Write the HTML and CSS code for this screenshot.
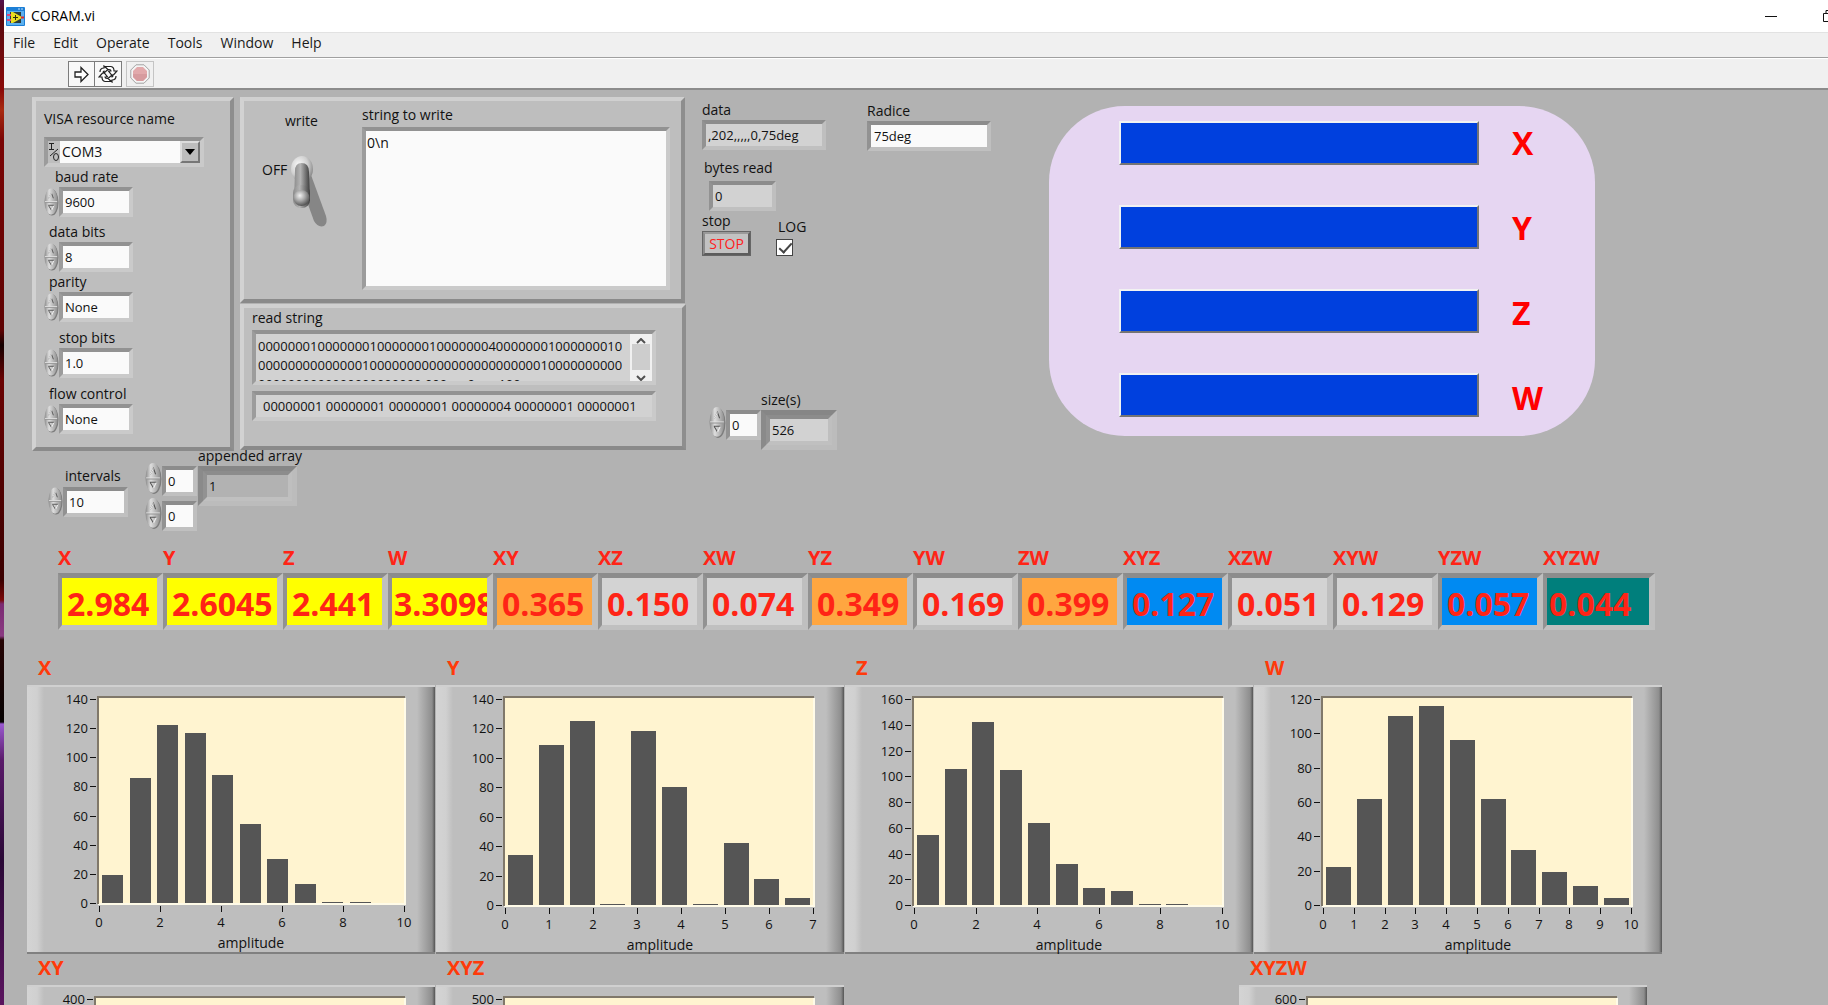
FILE: index.html
```html
<!DOCTYPE html>
<html lang="en">
<head>
<meta charset="utf-8">
<title>CORAM.vi</title>
<link rel="stylesheet" href="styles.css">
</head>
<body>
<svg class="defs" aria-hidden="true">
  <defs>
    <linearGradient id="knob" x1="0" y1="0" x2="1" y2="0">
      <stop offset="0" stop-color="#8a8a8a"/><stop offset=".35" stop-color="#dedede"/><stop offset="1" stop-color="#8e8e8e"/>
    </linearGradient>
    <linearGradient id="lever" x1="0" y1="0" x2="1" y2="0">
      <stop offset="0" stop-color="#8c8c8c"/><stop offset=".4" stop-color="#b4b4b4"/><stop offset="1" stop-color="#3c3c3c"/>
    </linearGradient>
    <radialGradient id="tip" cx=".4" cy=".35" r=".65">
      <stop offset="0" stop-color="#f2f2f2"/><stop offset=".5" stop-color="#a8a8a8"/><stop offset="1" stop-color="#555"/>
    </radialGradient>
    <radialGradient id="base" cx=".35" cy=".35" r=".7">
      <stop offset="0" stop-color="#fafafa"/><stop offset=".6" stop-color="#cfcfcf"/><stop offset="1" stop-color="#8a8a8a"/>
    </radialGradient>
    <symbol id="spin" viewBox="0 0 16 30">
      <ellipse cx="8.500" cy="15.500" rx="7" ry="14" fill="#7c7c7c"/>
      <ellipse cx="7.500" cy="14.500" rx="7" ry="14" fill="url(#knob)"/>
      <path d="M1 14.500H14" stroke="#e0e0e0"/><path d="M1 15.500H14" stroke="#999"/>
      <path d="M5 11 8 5.500 10 11" fill="none" stroke="#555"/><path d="M5 11 8 5.500" fill="none" stroke="#f0f0f0"/>
      <path d="M4.500 18.500H10.500M5 19 8 24" fill="none" stroke="#555"/><path d="M10.500 19 8 24" stroke="#f0f0f0"/>
    </symbol>
  </defs>
</svg>
<div class="desktop">
  <div class="app">
    <header class="titlebar">
      <svg class="logo" viewBox="0 0 19 19" aria-hidden="true">
        <rect x="0" y="0" width="19" height="19" rx="1" fill="#1c7fd6"/>
        <rect x="1" y="4" width="17" height="14" fill="#5cb0ee"/>
        <path d="M12 2h2M15 2h2" stroke="#bfe0fa"/>
        <rect x="4" y="5" width="11" height="11" fill="#2c3c3c"/>
        <path d="M1 8h4M1 13h4" stroke="#e0457b" stroke-width="2"/>
        <path d="M13 10.500h5" stroke="#e02a2a" stroke-width="2"/>
        <path d="M5 5V16L7 16 15 11.500V9.500L7 5Z" fill="#e8dc20"/>
        <path d="M7 10.500h5M9.500 8v5" stroke="#2b2b10"/>
      </svg>
      <h1>CORAM.vi</h1>
      <div class="controls">
        <button type="button" aria-label="Minimize"><svg width="12" height="12" viewBox="0 0 12 12"><path d="M0 6.500H12" stroke="#111"/></svg></button>
        <button type="button" aria-label="Restore"><svg width="12" height="12" viewBox="0 0 12 12"><path d="M.5 3.500h8v8h-8zM3 3V.5h8.500v8.500H9" fill="none" stroke="#111"/></svg></button>
      </div>
    </header>
    <nav class="menu">
      <a href="#file">File</a><a href="#edit">Edit</a><a href="#operate">Operate</a><a href="#tools">Tools</a><a href="#window">Window</a><a href="#help">Help</a>
    </nav>
    <div class="toolbar">
      <button type="button" class="tool" aria-label="Run"><svg width="15" height="17" viewBox="0 0 15 17"><path d="M1 6H7V1.500L14 8.500 7 15.500V11H1Z" fill="#fff" stroke="#222" stroke-width="1.300"/></svg></button>
      <button type="button" class="tool" aria-label="Run continuously"><svg width="20" height="18" viewBox="0 0 20 18"><g fill="#fff" stroke="#222" stroke-width="1.200"><path d="M7 1.500H13Q16 2 16 6H19L14.500 11 10.500 6H13Q13 4.500 11 4.500H9Z"/><path d="M13 16.500H7Q4 16 4 12H1L5.500 7 9.500 12H7Q7 13.500 9 13.500H11Z"/><path d="M2 7Q2 3 6 3V1L10 4.500 6 8V6Q5 6 5 8"/><path d="M18 11Q18 15 14 15V17L10 13.500 14 10V12Q15 12 15 10"/></g></svg></button>
      <button type="button" class="tool abort" aria-label="Abort"><svg width="20" height="20" viewBox="0 0 20 20"><path d="M6 .8H14L19.200 6V14L14 19.200H6L.8 14V6Z" fill="#f4f4f4" stroke="#a3a3a3"/><path d="M7 3H13L17 7V13L13 17H7L3 13V7Z" fill="#e2a9ab"/><path d="M3 10H17V13L13 17H7L3 13Z" fill="#d79b9e"/></svg></button>
    </div>

    <main class="canvas">
      <section class="upper">
        <div class="io">
          <div class="io-panels">
            <div class="panel visa">
              <label for="visa">VISA resource name</label>
              <div class="combo sunken">
                <svg width="12" height="22" viewBox="0 0 12 22" aria-hidden="true"><path d="M1 2.500h5M3.500 2.500v6M1 8.500h5M2 15 10 8" stroke="#222" fill="none"/><ellipse cx="8" cy="16" rx="2.500" ry="3.500" fill="none" stroke="#222"/></svg>
                <select id="visa"><option>COM3</option></select>
                <span class="drop" aria-hidden="true"><svg width="10" height="6" viewBox="0 0 10 6"><path d="M0 0H10L5 6Z" fill="#000"/></svg></span>
              </div>
              <div class="settings">
                <div><label class="in-md" for="baud">baud rate</label><div class="num"><button type="button" class="spin" aria-label="Step baud rate"><svg><use href="#spin"/></svg></button><input class="sunken" id="baud" value="9600"></div></div>
                <div><label class="in-sm" for="bits">data bits</label><div class="num"><button type="button" class="spin" aria-label="Step data bits"><svg><use href="#spin"/></svg></button><input class="sunken" id="bits" value="8"></div></div>
                <div><label class="in-sm" for="parity">parity</label><div class="num"><button type="button" class="spin" aria-label="Step parity"><svg><use href="#spin"/></svg></button><input class="sunken" id="parity" value="None"></div></div>
                <div><label class="in-lg" for="stopbits">stop bits</label><div class="num"><button type="button" class="spin" aria-label="Step stop bits"><svg><use href="#spin"/></svg></button><input class="sunken" id="stopbits" value="1.0"></div></div>
                <div><label class="in-sm" for="flow">flow control</label><div class="num"><button type="button" class="spin" aria-label="Step flow control"><svg><use href="#spin"/></svg></button><input class="sunken" id="flow" value="None"></div></div>
              </div>
            </div>
            <div class="strings">
              <div class="panel write">
                <div class="toggle">
                  <label for="write">write</label>
                  <div class="switch">
                    <span>OFF</span>
                    <label for="write"><input type="checkbox" id="write">
                      <svg width="42" height="74" viewBox="0 0 42 74" aria-hidden="true">
                        <path d="M12 30 25 66Q29 73 35 71Q39 68 37 61L22 20Z" fill="#868686"/>
                        <ellipse cx="13" cy="14" rx="11" ry="13" fill="url(#base)"/>
                        <path d="M6 16Q6 8 12.500 8Q20 8 20 17L21 46H5Z" fill="url(#lever)"/>
                        <rect x="4" y="30" width="17" height="23" rx="8" fill="url(#lever)"/>
                        <circle cx="12.500" cy="43" r="8" fill="url(#tip)"/>
                      </svg>
                    </label>
                  </div>
                </div>
                <div class="towrite">
                  <label for="out">string to write</label>
                  <textarea class="sunken" id="out">0\n</textarea>
                </div>
              </div>
              <div class="panel read">
                <div class="readlabel">read string</div>
                <div class="sunken log">
                  <div class="logtext">0000000100000001000000010000000400000001000000010<br>0000000000000010000000000000000000000010000000000<br>0000000000000000000000 000,,,,&nbsp; 0,,,,&nbsp; &nbsp;100</div>
                  <div class="scroll" aria-hidden="true">
                    <svg width="10" height="6" viewBox="0 0 10 6"><path d="M1 5 5 1 9 5" fill="none" stroke="#505050" stroke-width="2"/></svg>
                    <span class="thumb"></span>
                    <svg width="10" height="6" viewBox="0 0 10 6"><path d="M1 1 5 5 9 1" fill="none" stroke="#505050" stroke-width="2"/></svg>
                  </div>
                </div>
                <input class="sunken ro" aria-label="read bytes" readonly value="00000001 00000001 00000001 00000004 00000001 00000001">
              </div>
            </div>
          </div>
          <div class="arrays">
            <div class="intervals"><label for="intervals">intervals</label><div class="num"><button type="button" class="spin" aria-label="Step intervals"><svg><use href="#spin"/></svg></button><input class="sunken" id="intervals" value="10"></div></div>
            <div class="indices">
              <div class="num index"><button type="button" class="spin" aria-label="Step row"><svg><use href="#spin"/></svg></button><input class="sunken" aria-label="row index" value="0"></div>
              <div class="num index"><button type="button" class="spin" aria-label="Step column"><svg><use href="#spin"/></svg></button><input class="sunken" aria-label="column index" value="0"></div>
            </div>
            <div class="appended"><label for="appended">appended array</label><div class="frame"><input class="sunken" id="appended" readonly value="1"></div></div>
          </div>
        </div>

        <div class="status">
          <label for="data">data</label>
          <input class="sunken ro" id="data" readonly value=",202,,,,,0,75deg">
          <div class="bytes"><label for="bytes">bytes read</label><input class="sunken ro" id="bytes" readonly value="0"></div>
          <div class="actions">
            <div><label for="stop">stop</label><button type="button" id="stop" class="stop">STOP</button></div>
            <div class="logbox"><label for="log">LOG</label><input type="checkbox" id="log" checked></div>
          </div>
          <div class="sizes">
            <div class="num index"><button type="button" class="spin" aria-label="Step size index"><svg><use href="#spin"/></svg></button><input class="sunken" aria-label="size index" value="0"></div>
            <div class="size"><label for="size">size(s)</label><div class="frame"><input class="sunken ro" id="size" readonly value="526"></div></div>
          </div>
        </div>

        <div class="radice"><label for="radice">Radice</label><input class="sunken" id="radice" value="75deg"></div>

        <div class="lamps">
          <div class="bars"><span></span><span></span><span></span><span></span></div>
          <div class="names"><span>X</span><span>Y</span><span>Z</span><span>W</span></div>
        </div>
      </section>

      <section class="values">
        <div><label for="vX">X</label><input class="sunken yellow" id="vX" readonly value="2.984"></div>
        <div><label for="vY">Y</label><input class="sunken yellow" id="vY" readonly value="2.6045"></div>
        <div><label for="vZ">Z</label><input class="sunken yellow" id="vZ" readonly value="2.441"></div>
        <div><label for="vW">W</label><input class="sunken yellow tight" id="vW" readonly value="3.3098"></div>
        <div><label for="vXY">XY</label><input class="sunken orange" id="vXY" readonly value="0.365"></div>
        <div><label for="vXZ">XZ</label><input class="sunken" id="vXZ" readonly value="0.150"></div>
        <div><label for="vXW">XW</label><input class="sunken" id="vXW" readonly value="0.074"></div>
        <div><label for="vYZ">YZ</label><input class="sunken orange" id="vYZ" readonly value="0.349"></div>
        <div><label for="vYW">YW</label><input class="sunken" id="vYW" readonly value="0.169"></div>
        <div><label for="vZW">ZW</label><input class="sunken orange" id="vZW" readonly value="0.399"></div>
        <div><label for="vXYZ">XYZ</label><input class="sunken blue" id="vXYZ" readonly value="0.127"></div>
        <div><label for="vXZW">XZW</label><input class="sunken" id="vXZW" readonly value="0.051"></div>
        <div><label for="vXYW">XYW</label><input class="sunken" id="vXYW" readonly value="0.129"></div>
        <div><label for="vYZW">YZW</label><input class="sunken blue" id="vYZW" readonly value="0.057"></div>
        <div><label for="vXYZW">XYZW</label><input class="sunken teal tight" id="vXYZW" readonly value="0.044"></div>
      </section>

      <section class="charts">
        <figure data-chart="X"><figcaption>X</figcaption></figure>
        <figure data-chart="Y"><figcaption>Y</figcaption></figure>
        <figure data-chart="Z"><figcaption>Z</figcaption></figure>
        <figure data-chart="W"><figcaption>W</figcaption></figure>
        <figure data-chart="XY"><figcaption>XY</figcaption></figure>
        <figure data-chart="XYZ"><figcaption>XYZ</figcaption></figure>
        <figure data-chart="XYZW" class="last"><figcaption>XYZW</figcaption></figure>
      </section>
    </main>
  </div>
</div>
<script src="charts.js"></script>
</body>
</html>
```
FILE: charts.js
```js
// Histograms of the amplitude for each channel.
const charts = {
  X: { left: 71, bottom: 218, yMax: 140, yStep: 20, xMax: 10, xStep: 2, pitch: 27.5, bar: 21, data: [19, 86, 122, 117, 88, 54, 30, 13, 1, 1] },
  Y: { left: 68, bottom: 220, yMax: 140, yStep: 20, xMax: 7, xStep: 1, pitch: 30.8, bar: 25, data: [34, 109, 125, 0, 118, 80, 0, 42, 18, 5] },
  Z: { left: 68, bottom: 220, yMax: 160, yStep: 20, xMax: 10, xStep: 2, pitch: 27.7, bar: 22, data: [54, 106, 142, 105, 64, 32, 13, 11, 1, 1] },
  W: { left: 68, bottom: 220, yMax: 120, yStep: 20, xMax: 10, xStep: 1, pitch: 30.9, bar: 25, data: [22, 62, 110, 116, 96, 62, 32, 19, 11, 4] },
  XY: { left: 68, bottom: 220, yMax: 400, yStep: 400, data: [] },
  XYZ: { left: 68, bottom: 220, yMax: 500, yStep: 500, data: [] },
  XYZW: { left: 68, bottom: 220, yMax: 600, yStep: 600, data: [] }
};
const plotTop = 14, plotRight = 378;

function draw(c) {
  const x0 = c.left + 1, x1 = plotRight - 1;
  const y = v => Math.round(c.bottom - v * (c.bottom - plotTop) / c.yMax);
  const x = v => Math.round(x0 + v * (x1 - x0) / c.xMax);
  let s = `<rect class="plot" x="${c.left}" y="12" width="${plotRight - c.left}" height="${c.bottom - 11}"/>`;
  s += `<path class="rim" d="M${plotRight} 13V${c.bottom + 1}H${c.left}"/><path class="edge" d="M${c.left} ${c.bottom + 1}V12H${plotRight}"/>`;
  c.data.forEach((v, i) => {
    const bx = Math.round(c.left + 4 + i * c.pitch), by = Math.min(y(v), c.bottom - 1);
    s += `<rect class="bar" x="${bx}" y="${by}" width="${c.bar}" height="${c.bottom - by}"/>`;
  });
  for (let v = c.data.length ? 0 : c.yMax; v <= c.yMax; v += c.yStep) {
    s += `<rect class="tick" x="${c.left - 8}" y="${y(v)}" width="6" height="1"/>`;
    s += `<text x="${c.left - 10}" y="${y(v) + 5}" text-anchor="end">${v}</text>`;
  }
  if (c.data.length) {
    for (let v = 0; v <= c.xMax; v += c.xStep) {
      s += `<rect class="tick" x="${x(v)}" y="${c.bottom + 3}" width="1" height="6"/>`;
      s += `<text x="${x(v)}" y="${c.bottom + 24}" text-anchor="middle">${v}</text>`;
    }
    s += `<text class="axis" x="224" y="${c.bottom + 45}" text-anchor="middle">amplitude</text>`;
  }
  return `<svg width="408" height="269" viewBox="0 0 408 269">${s}</svg>`;
}
document.querySelectorAll("[data-chart]").forEach(f => f.insertAdjacentHTML("beforeend", draw(charts[f.dataset.chart])));
```
FILE: styles.css
```css
* { box-sizing: border-box; }
body { margin: 0; font: 14px/20px "Open Sans", "Noto Sans", sans-serif; color: #111; }
button, input, select, textarea { font: inherit; color: inherit; margin: 0; padding: 0; border: 0; border-radius: 0; background: none; outline: 0; }
.defs { position: absolute; width: 0; height: 0; }
.desktop { height: 100vh; padding-left: 4px; overflow: hidden;
  background: linear-gradient(#54124e 0, #5a0a10 20px, #8a0a08 90px, #a82a10 110px, #7a0404 140px, #5e0202 330px, #140000 345px, #6a0202 380px, #3a0000 580px, #7a0808 600px, #7a2a72 604px, #8a3a82 636px, #260404 640px, #060202 722px, #9a5ad0 724px, #5a1a6a 760px, #2a0836 860px, #5a145e 100%); }
.app { height: 100%; display: flex; flex-direction: column; background: #f0f0f0; }

.titlebar { display: flex; align-items: center; height: 32px; flex: none; padding-left: 2px; background: #fff; overflow: hidden; }
.logo { width: 19px; height: 19px; flex: none; }
.titlebar h1 { margin: 0 auto 0 6px; font-size: 14px; line-height: 20px; font-weight: 400; color: #000; }
.controls { display: flex; flex: none; margin-right: -30px; }
.controls button { width: 58px; height: 28px; display: flex; align-items: center; justify-content: center; }

.menu { display: flex; gap: 18px; height: 26px; flex: none; padding: 0 9px; border-top: 1px solid #e2e2e2; border-bottom: 1px solid #a0a0a0; line-height: 20px; }
.menu a { color: #1a1a1a; text-decoration: none; }

.toolbar { display: flex; height: 30px; flex: none; padding: 2px 64px 0; border-top: 1px solid #fff; }
.tool { display: flex; align-items: center; justify-content: center; width: 27px; height: 26px; border: 1px solid #7c7c7c; background: #f8f8f8; }
.tool + .tool { border-left: 0; }
.tool.abort { margin-left: 4px; width: 28px; border: 1px solid #c4c4c4; background: #f0f0f0; }

.canvas { flex: 1; min-height: 0; overflow: hidden; background: #b2b2b2; border-top: 2px solid #8c8c8c; padding-top: 7px; }
.canvas label { display: block; }
.upper { display: flex; align-items: flex-start; padding-left: 28px; }
.io { width: 654px; flex: none; }
.io-panels { display: flex; gap: 6px; }
.panel { background: #bebebe; border: 4px solid; border-color: #d0d0d0 #8e8e8e #8a8a8a #d2d2d2; }
.sunken { display: block; border: 4px solid; border-color: #929292 #cacaca #cacaca #9c9c9c; background-color: #fafafa; }
.ro { background-color: #d2d2d2; }
input.sunken { height: 30px; padding: 0 2px; font-size: 13px; }
.status > .sunken, .bytes .sunken, .radice .sunken, .arrays .sunken, .sizes .sunken, .values .sunken { border-color: #8c8c8c #bfbfbf #c0c0c0 #929292; }

.visa { width: 202px; height: 354px; padding: 8px 8px 0; }
.combo { display: flex; align-items: center; width: 160px; height: 30px; margin-top: 8px; background: #bebebe; }
.combo select { flex: 1; height: 22px; padding-left: 2px; appearance: none; background: #fafafa; }
.drop { display: flex; align-items: center; justify-content: center; width: 20px; height: 22px; background: #bdbdbd; border: 2px solid; border-color: #dcdcdc #777 #777 #dcdcdc; }
.settings { display: grid; grid-template-rows: 55px 50px 56px 56px 51px; }
.in-sm { padding-left: 5px; }
.in-md { padding-left: 11px; }
.in-lg { padding-left: 15px; }
.num { display: flex; align-items: flex-start; }
.num input { width: 74px; }
.spin { width: 15px; height: 30px; flex: none; }
.spin svg { display: block; width: 100%; height: 100%; }

.strings { display: flex; flex-direction: column; gap: 1px; width: 446px; }
.write { display: flex; width: 445px; height: 206px; }
.toggle { width: 118px; padding: 10px 0 0 18px; }
.toggle > label { padding-left: 23px; }
.switch { display: flex; margin-top: 24px; gap: 2px; line-height: 30px; }
.switch input { position: absolute; opacity: 0; }
.switch svg { display: block; }
.towrite { padding-top: 4px; }
.towrite textarea { width: 308px; height: 163px; margin-top: 2px; padding: 2px 1px; resize: none; line-height: 20px; }
.read { height: 146px; padding-left: 8px; }
.log { display: flex; justify-content: space-between; width: 404px; height: 55px; margin-top: 2px; overflow: hidden; background: #d2d2d2; }
.logtext { padding: 3px 2px; font-size: 13px; line-height: 19px; white-space: nowrap; }
.scroll { display: flex; flex-direction: column; align-items: center; justify-content: space-between; width: 22px; flex: none; padding-top: 4px; background: #f0f0f0; }
.thumb { width: 18px; flex: 1; background: #cdcdcd; margin-bottom: 5px; }
.read input { width: 404px; margin-top: 6px; padding-left: 7px; }

.arrays { display: flex; margin-top: -5px; padding-left: 16px; }
.intervals { width: 97px; padding-top: 20px; }
.intervals label { padding-left: 17px; }
.intervals input { width: 65px; margin-top: 1px; }
.indices { width: 53px; padding-top: 15px; }
.index input { width: 35px; height: 30px; margin-top: 5px; }
.index .spin { width: 17px; height: 35px; }
.frame { width: fit-content; border: 5px solid; border-color: #868686 #bcbcbc #bcbcbc #8a8a8a; }
.appended input.sunken { width: 89px; background: #b2b2b2; }

.status { width: 134px; margin-left: 16px; padding-top: 3px; flex: none; }
.status > .sunken { width: 124px; }
.bytes { padding-top: 8px; }
.bytes label { padding-left: 2px; }
.bytes input { width: 67px; margin: 3px 0 0 7px; }
.actions { display: flex; gap: 25px; }
.stop { display: block; width: 49px; height: 25px; border: 3px solid; border-color: #9a9a9a #5c5c5c #5c5c5c #8c8c8c; outline: 1px solid #666; outline-offset: -1px; background: #c2c2c2; color: #ff2020; line-height: 18px; }
.logbox { padding-top: 6px; }
.logbox label { padding-left: 2px; }
.logbox input { display: block; appearance: none; width: 17px; height: 17px; margin-top: 2px; background: #fff; border: 1px solid #444; }
.logbox input:checked::after { content: ""; display: block; width: 11px; height: 5px; margin: 3px 2px; border: solid #444; border-width: 0 0 2px 2px; transform: rotate(-48deg); }
.sizes { display: flex; margin-top: 134px; padding-left: 7px; }
.sizes .num { padding-top: 15px; }
.size { width: 77px; }
.size input.sunken { width: 66px; }

.radice { width: 124px; margin-left: 31px; padding-top: 4px; flex: none; }
.radice input { width: 124px; padding-left: 3px; }

.lamps { display: flex; width: 546px; height: 330px; flex: none; margin: 9px 0 0 58px; padding: 15px 0 0 70px; gap: 33px; border-radius: 76px; background: #e6d6f2; }
.bars { display: flex; flex-direction: column; gap: 40px; }
.bars span { width: 360px; height: 44px; background: #0040de; border: 2px solid; border-color: #f2f2f2 #747474 #747474 #f2f2f2; }
.names { display: flex; flex-direction: column; gap: 41px; font-size: 32px; line-height: 44px; font-weight: 700; color: #f00; }

.values { display: grid; grid-template-columns: 105px 120px repeat(12, 105px) 112px; padding: 15px 0 0 54px; color: #ff2416; font-weight: 700; }
.values label { font-size: 20px; line-height: 24px; }
.values input.sunken { width: 100%; height: 57px; margin-top: 3px; border-width: 5px 6px 5px 4px; padding: 3px 3px 0 5px; font-size: 32px; background-color: #d3d3d3; }
.values input.tight { padding-left: 2px; padding-right: 0; }
.values input.yellow { background-color: #ff0; }
.values input.orange { background-color: #ffa640; }
.values input.blue { background-color: #008af2; }
.values input.teal { background-color: #007f7c; }

.charts { display: grid; grid-template-columns: repeat(4, 409px); row-gap: 2px; padding: 26px 0 0 23px; }
.charts figure { margin: 0; }
.charts figcaption { padding: 0 0 5px 11px; font-size: 20px; line-height: 24px; font-weight: 700; color: #ff3a0a; }
.charts svg { display: block; background:
  linear-gradient(#d0d0d0, #d0d0d0) 0 0 / 100% 2px no-repeat,
  linear-gradient(#808080, #808080) 0 100% / 100% 2px no-repeat,
  linear-gradient(90deg, #d4d4d4 0, #d0d0d0 10px, #bebebe 17px, #bebebe calc(100% - 18px), #8e8e8e calc(100% - 3px), #555 100%); }
.charts .last { grid-column: 4; margin-left: -15px; }
.charts text { font-size: 13px; fill: #111; }
.charts .axis { font-size: 14px; }
.plot { fill: #fff4d0; }
.edge { fill: none; stroke: #80786a; stroke-width: 2; }
.rim { fill: none; stroke: #fffbe8; stroke-width: 2; }
.bar { fill: #555; }
.tick { fill: #111; }
```
